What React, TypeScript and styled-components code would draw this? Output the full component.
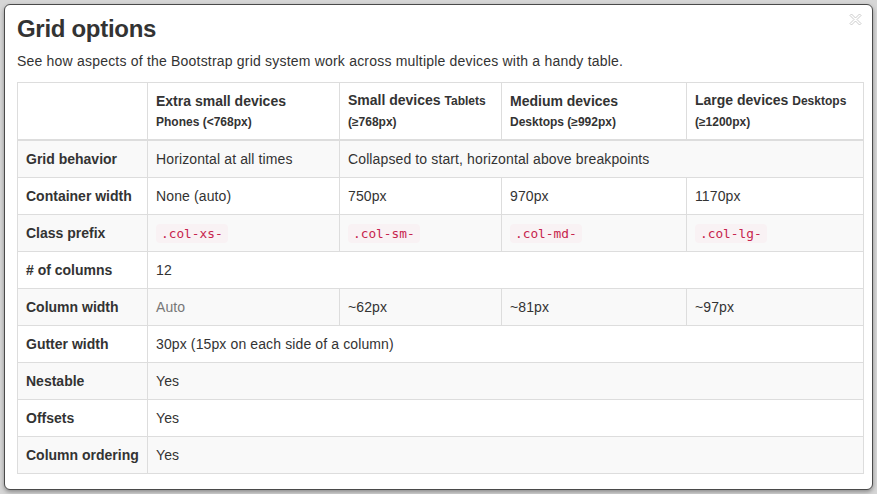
import React from "react";
import styled, { createGlobalStyle } from "styled-components";

const Global = createGlobalStyle`
  html, body { margin: 0; padding: 0; }
  body {
    background: #d6d6d6;
    font-family: "Liberation Sans", Arial, sans-serif;
    color: #333;
    width: 877px;
    height: 494px;
    overflow: hidden;
  }
`;

const Stage = styled.div`
  padding: 4px 0 0 4px;
`;

const Modal = styled.div`
  position: relative;
  box-sizing: border-box;
  width: 869px;
  background: #fff;
  border: 1px solid #4a4a4a;
  border-radius: 6px;
  box-shadow: 0 2px 4px rgba(0, 0, 0, 0.35);
  padding: 11px 9px 15px 12px;
`;

const Close = styled.button`
  position: absolute;
  top: 7px;
  right: 10px;
  width: 14px;
  height: 14px;
  padding: 0;
  border: 0;
  background: transparent;
  display: flex;
  align-items: center;
  justify-content: center;
`;

const Title = styled.h4`
  margin: 0;
  font-size: 24px;
  line-height: 26.4px;
  font-weight: 700;
  color: #333;
  letter-spacing: -0.3px;
`;

const Lead = styled.p`
  margin: 9px 0 11px;
  font-size: 14px;
  line-height: 20px;
  letter-spacing: 0.2px;
`;

const Table = styled.table`
  width: 846px;
  table-layout: fixed;
  border-collapse: collapse;
  border: 1px solid #ddd;
  font-size: 14px;
  line-height: 20px;
`;

const HeadCell = styled.th`
  text-align: left;
  vertical-align: bottom;
  font-weight: 700;
  padding: 7px 8px 7px;
  border: 1px solid #ddd;
  border-bottom: 2px solid #ddd;
`;

const Small = styled.small`
  font-size: 12px;
  font-weight: 700;
`;

const Row = styled.tr<{ $striped?: boolean }>`
  background: ${(p) => (p.$striped ? "#f9f9f9" : "#fff")};
`;

const RowHead = styled.th`
  text-align: left;
  font-weight: 700;
  padding: 8px;
  border: 1px solid #ddd;
  white-space: nowrap;
`;

const Cell = styled.td<{ $muted?: boolean }>`
  padding: 8px;
  border: 1px solid #ddd;
  color: ${(p) => (p.$muted ? "#777" : "#333")};
  white-space: nowrap;
  letter-spacing: 0.12px;
`;

const Code = styled.code`
  font-family: "DejaVu Sans Mono", "Liberation Mono", monospace;
  font-size: 12.8px;
  line-height: 1;
  letter-spacing: 0;
  color: #c7254e;
  background: #f9f2f4;
  padding: 2px 5px;
  border-radius: 4px;
`;

const CloseIcon = () => (
  <svg width="13" height="13" viewBox="0 0 13 13">
    <path
      d="M1 2.5 L2.5 1 L6.5 5 L10.5 1 L12 2.5 L8 6.5 L12 10.5 L10.5 12 L6.5 8 L2.5 12 L1 10.5 L5 6.5 Z"
      fill="#fff"
      stroke="#c4c4c4"
      strokeWidth="0.9"
      strokeLinejoin="round"
    />
  </svg>
);

type BodyRow = {
  label: string;
  cells: { text: React.ReactNode; span?: number; muted?: boolean }[];
};

const rows: BodyRow[] = [
  {
    label: "Grid behavior",
    cells: [
      { text: "Horizontal at all times" },
      { text: "Collapsed to start, horizontal above breakpoints", span: 3 },
    ],
  },
  {
    label: "Container width",
    cells: [{ text: "None (auto)" }, { text: "750px" }, { text: "970px" }, { text: "1170px" }],
  },
  {
    label: "Class prefix",
    cells: [
      { text: <Code>.col-xs-</Code> },
      { text: <Code>.col-sm-</Code> },
      { text: <Code>.col-md-</Code> },
      { text: <Code>.col-lg-</Code> },
    ],
  },
  { label: "# of columns", cells: [{ text: "12", span: 4 }] },
  {
    label: "Column width",
    cells: [{ text: "Auto", muted: true }, { text: "~62px" }, { text: "~81px" }, { text: "~97px" }],
  },
  { label: "Gutter width", cells: [{ text: "30px (15px on each side of a column)", span: 4 }] },
  { label: "Nestable", cells: [{ text: "Yes", span: 4 }] },
  { label: "Offsets", cells: [{ text: "Yes", span: 4 }] },
  { label: "Column ordering", cells: [{ text: "Yes", span: 4 }] },
];

export default function App() {
  return (
    <>
      <Global />
      <Stage>
        <Modal>
          <Close aria-label="Close">
            <CloseIcon />
          </Close>
          <Title>Grid options</Title>
          <Lead>See how aspects of the Bootstrap grid system work across multiple devices with a handy table.</Lead>
          <Table>
            <colgroup>
              <col style={{ width: 130 }} />
              <col style={{ width: 192 }} />
              <col style={{ width: 162 }} />
              <col style={{ width: 185 }} />
              <col style={{ width: 177 }} />
            </colgroup>
            <thead>
              <tr>
                <HeadCell />
                <HeadCell>
                  Extra small devices
                  <br />
                  <Small>Phones (&lt;768px)</Small>
                </HeadCell>
                <HeadCell>
                  Small devices <Small>Tablets</Small>
                  <br />
                  <Small>(≥768px)</Small>
                </HeadCell>
                <HeadCell>
                  Medium devices
                  <br />
                  <Small>Desktops (≥992px)</Small>
                </HeadCell>
                <HeadCell>
                  Large devices <Small>Desktops</Small>
                  <br />
                  <Small>(≥1200px)</Small>
                </HeadCell>
              </tr>
            </thead>
            <tbody>
              {rows.map((r, i) => (
                <Row key={r.label} $striped={i % 2 === 0}>
                  <RowHead>{r.label}</RowHead>
                  {r.cells.map((c, j) => (
                    <Cell key={j} colSpan={c.span} $muted={c.muted}>
                      {c.text}
                    </Cell>
                  ))}
                </Row>
              ))}
            </tbody>
          </Table>
        </Modal>
      </Stage>
    </>
  );
}
